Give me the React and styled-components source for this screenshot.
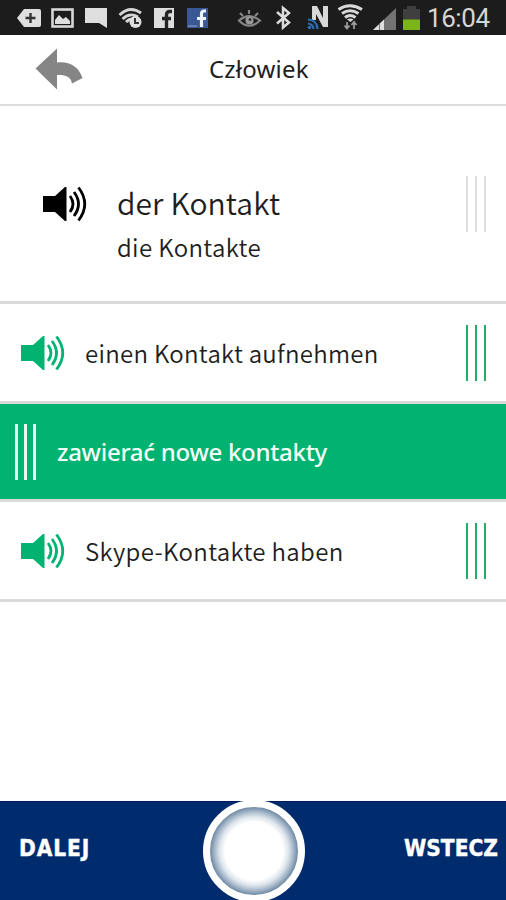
import styled, { createGlobalStyle } from "styled-components";

const GlobalStyle = createGlobalStyle`
    * {
        box-sizing: border-box;
    }
    body {
        margin: 0;
        background: #fff;
    }
`;

const Screen = styled.div`
    display: flex;
    flex-direction: column;
    width: 506px;
    height: 900px;
    overflow: hidden;
    background: #fff;
    color: #1e1e1e;
    font-family: "Noto Sans CJK SC", "Noto Sans", sans-serif;
`;

const StatusBar = styled.div`
    flex: none;
    height: 35px;
    background: #1c1c1c;
`;

const StatusIcons = styled.svg`
    display: block;
`;

const Header = styled.header`
    flex: none;
    display: grid;
    grid-template-columns: 209px 1fr;
    align-items: center;
    height: 71px;
    padding-bottom: 2px;
    border-bottom: 2px solid #dcdcdc;
`;

const BackButton = styled.button`
    display: flex;
    width: 48px;
    height: 42px;
    margin-left: 35px;
    padding: 0;
    border: 0;
    background: none;
`;

const Label = styled.span`
    font-size: ${props => props.$size}px;
    letter-spacing: ${props => props.$spacing || 0}px;
    font-weight: ${props => props.$weight || 350};
    line-height: 36px;
    white-space: nowrap;
`;

// Polish diacritics need the plain Noto face
const PolishLabel = styled(Label)`
    font-family: "Noto Sans", sans-serif;
`;

const Row = styled.div`
    flex: none;
    display: flex;
    align-items: center;
    height: ${props => props.$height}px;
    padding: 0 20px 0 ${props => props.$inset}px;
    border-bottom: 3px solid #dadada;
    background: ${props => (props.$active ? "#02b271" : "#fff")};
    color: ${props => (props.$active ? "#f4fff9" : "inherit")};
`;

const Texts = styled.div`
    display: flex;
    flex-direction: column;
    gap: 9px;
    flex: 1;
    padding-left: ${props => props.$gap}px;
    padding-top: ${props => props.$top || 0}px;
`;

const Grip = styled.div`
    width: ${props => props.$width || 20}px;
    height: 56px;
    border: solid ${props => props.$color};
    border-width: 0 ${props => props.$line || 2}px;
    display: flex;
    justify-content: center;
    &::after {
        content: '';
        width: ${props => props.$line || 2}px;
        background: ${props => props.$color};
    }
`;

const Footer = styled.footer`
    display: grid;
    grid-template-columns: 203px 102px 1fr;
    height: 99px;
    margin-top: auto;
    background: #002b6d;
    border-top: 1px solid #001a5c;
    color: #fff;
    font-family: "DejaVu Sans Condensed", "DejaVu Sans", sans-serif;
    font-stretch: condensed;
`;

const FooterButton = styled.div`
    padding: ${props => (props.$right ? "28px 8px 0 0" : "28px 0 0 19px")};
    text-align: ${props => (props.$right ? "right" : "left")};
    -webkit-text-stroke: 0.4px #fff;
`;

const RoundButton = styled.div`
    width: 102px;
    height: 102px;
    margin-top: -2px;
    border: 7px solid #fff;
    border-radius: 50%;
    background: radial-gradient(circle closest-side, #fff 66%, #dfe6ed 78%, #a9bacb 89%, #6e88a4 100%);
`;

function Speaker({ color }) {
    return (
        <svg width="45" height="36" viewBox="0 0 45 36">
            <path d="M1 10H13L23 1H24.500V35H23L13 26H1Z" fill={color} />
            <g fill="none" stroke={color} strokeWidth="2.8">
                <path d="M28 10Q34 18 28 26" />
                <path d="M32 6Q41 18 32 30" />
                <path d="M36.500 1.500Q49 18 36.500 34.500" />
            </g>
        </svg>
    );
}

function StatusBarContent() {
    return (
        <StatusIcons width="506" height="35" viewBox="0 0 506 35">
            <path d="M17 18L24 9H39Q41 9 41 11V25Q41 27 39 27H24Z" fill="#dedede" />
            <path d="M30.500 13V23M25.500 18H35.500" stroke="#333" strokeWidth="2.400" />

            <rect x="52.500" y="9.500" width="20" height="17" fill="none" stroke="#d8d8d8" strokeWidth="2.600" />
            <path d="M55 24V20L59 15L63 19L66 17L70 21V24Z" fill="#dedede" />

            <path d="M85 8H107V28L99 23H85Z" fill="#dedede" />

            <g fill="none" stroke="#d4d4d4" strokeWidth="2.800">
                <path d="M119.500 15Q130 5 141 13" />
                <path d="M122.500 19Q130 12 138 17" />
                <path d="M126 22Q129 19 133 19" />
            </g>
            <circle cx="135.500" cy="22" r="6" fill="#dedede" />
            <path d="M135 18V23H139" fill="none" stroke="#333" strokeWidth="2" />

            <rect x="154" y="8" width="20" height="20" fill="#dedede" />
            <path d="M166.500 28V15Q166.500 11.500 169.500 11.500H172M162 18.500H171" fill="none" stroke="#242424" strokeWidth="3.400" />

            <rect x="187" y="8" width="21" height="20" fill="#3a5795" />
            <path d="M188 26H197" stroke="#7d91ba" strokeWidth="1.400" />
            <path d="M201.500 27V14Q201.500 11 204 11H206M197 18.500H206" fill="none" stroke="#eef2fa" strokeWidth="3.200" />

            <g fill="none" stroke="#858585" strokeWidth="2.200">
                <path d="M239 20.500Q249 12 260 20.500Q249 31 239 20.500Z" />
                <path d="M240 13L243 16M249 10V14M258 13L255 16" />
            </g>
            <circle cx="249.500" cy="20.500" r="4" fill="#999" />
            <circle cx="250" cy="19.500" r="1.500" fill="#333" />

            <path d="M277 12L289 22.500L283 27.500V8L289 13L277 23.500" fill="none" stroke="#dcdcdc" strokeWidth="2.500" />

            <path d="M312 20V6H317L323 18V6H328V27H323L316 14V20Z" fill="#d8d8d8" />
            <g fill="none" stroke="#2a6fb5" strokeWidth="2.200">
                <path d="M308 19.500Q317 20 317.500 29" />
                <path d="M308 23.500Q313 24 313.500 29" />
            </g>
            <circle cx="309.500" cy="27.500" r="1.800" fill="#2a6fb5" />

            <g fill="none" stroke="#d8d8d8" strokeWidth="3">
                <path d="M338.500 9.500Q350 2 362 9.500" />
                <path d="M342 13.500Q350 8 358.500 13.500" />
                <path d="M345 17.500Q350 13.500 355.500 17.500" />
            </g>
            <path d="M347 19.500Q350 17.500 353.500 19.500L350.500 22Z" fill="#d8d8d8" />
            <path d="M347 22V28M344.500 25.500L347 28.500L349.500 25.500M354 29V22M351.500 25L354 22L356.500 25" fill="none" stroke="#9a9a9a" strokeWidth="1.800" />

            <path d="M373 30L396 8V30Z" fill="#737373" />
            <path d="M373 30L384 19.500V30Z" fill="#dedede" />
            <path d="M379.500 24V30" stroke="#777" strokeWidth="1" />

            <path d="M403 30V9H407V6H416V9H420V30Z" fill="#3f3f3f" />
            <rect x="403" y="19.500" width="17" height="10.500" fill="#7cb518" />

            <text x="427" y="26.500" fill="#d6d6d6" fontFamily="Roboto, sans-serif" fontSize="26" textLength="63">16:04</text>
        </StatusIcons>
    );
}

function App() {
    return (
        <>
            <GlobalStyle />
            <Screen>
                <StatusBar>
                    <StatusBarContent />
                </StatusBar>
                <Header>
                    <BackButton aria-label="back">
                        <svg width="48" height="42" viewBox="0 0 48 42">
                            <path d="M0.500 20.500L22 0.500V14.500C34 13 43.500 18 47.500 30L37 35.500C36 29 31 26.500 22 27V41.500Z" fill="#858585" />
                        </svg>
                    </BackButton>
                    <PolishLabel $size={24} $spacing={0.2} $weight={400}>Człowiek</PolishLabel>
                </Header>
                <Row $height={198} $inset={42}>
                    <Speaker color="#000" />
                    <Texts $gap={30} $top={42}>
                        <Label $size={30} $spacing={0.1}>der Kontakt</Label>
                        <Label $size={24} $spacing={0.35}>die Kontakte</Label>
                    </Texts>
                    <Grip $color="#dedede" />
                </Row>
                <Row $height={100} $inset={20}>
                    <Speaker color="#02b271" />
                    <Texts $gap={20}>
                        <Label $size={24} $spacing={0.28}>einen Kontakt aufnehmen</Label>
                    </Texts>
                    <Grip $color="#20ae68" />
                </Row>
                <Row $height={98} $inset={15} $active>
                    <Grip $color="#e6fbf0" $line={3} $width={21} />
                    <Texts $gap={21}>
                        <PolishLabel $size={24} $spacing={-0.28} $weight={500}>zawierać nowe kontakty</PolishLabel>
                    </Texts>
                </Row>
                <Row $height={100} $inset={20}>
                    <Speaker color="#02b271" />
                    <Texts $gap={20}>
                        <Label $size={24} $spacing={0.35}>Skype-Kontakte haben</Label>
                    </Texts>
                    <Grip $color="#20ae68" />
                </Row>
                <Footer>
                    <FooterButton>
                        <Label $size={22.5} $spacing={0.9} $weight={700}>DALEJ</Label>
                    </FooterButton>
                    <RoundButton />
                    <FooterButton $right>
                        <Label $size={22.5} $weight={700}>WSTECZ</Label>
                    </FooterButton>
                </Footer>
            </Screen>
        </>
    );
}

export default App;
